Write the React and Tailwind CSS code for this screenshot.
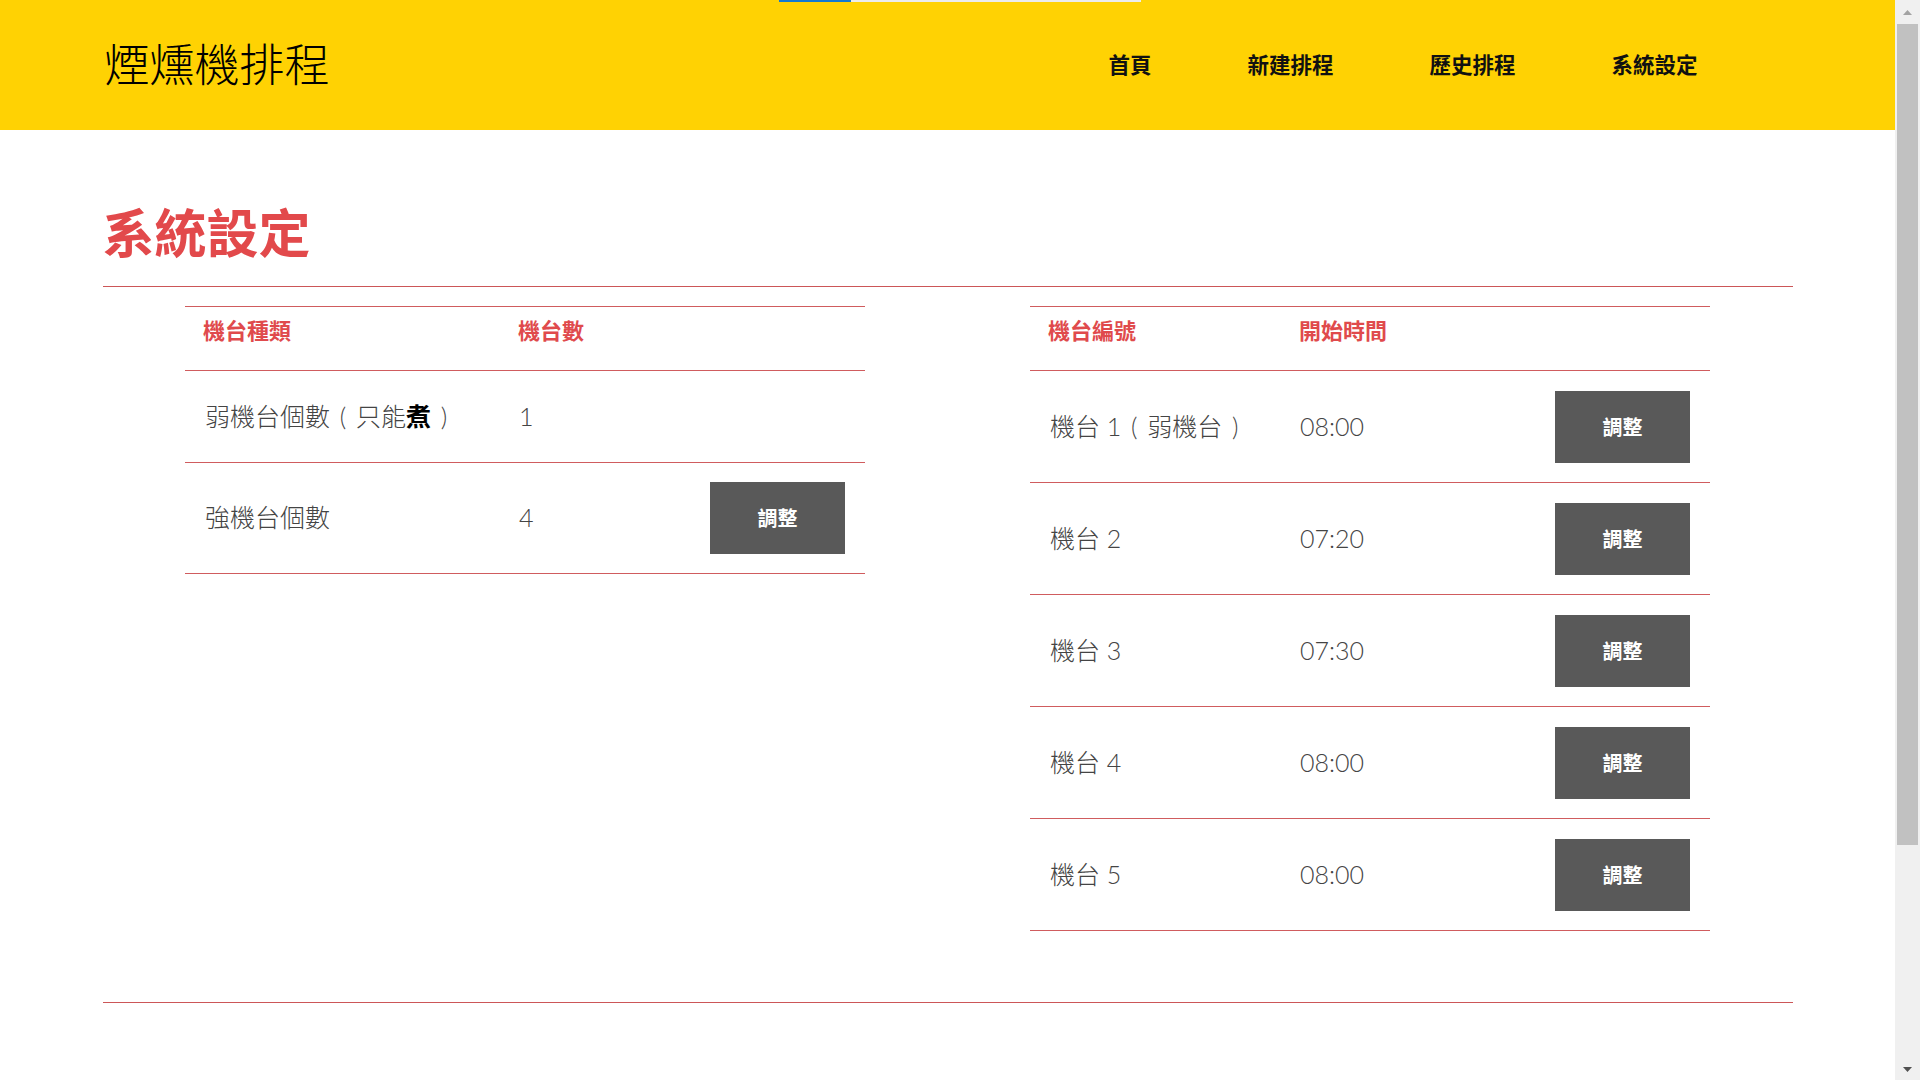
import React from "react";

const navItems = ["首頁", "新建排程", "歷史排程", "系統設定"];

// fullwidth parens in the original sit centred in their box
function P({ children }) {
  return <span className="inline-block w-[26px] text-center">{children}</span>;
}

const machineTypes = [
  {
    key: "weak",
    label: (
      <>
        弱機台個數<P>(</P>只能<span className="font-bold text-black">煮</span>
        <P>)</P>
      </>
    ),
    count: "1",
    adjustable: false,
    height: "h-[92px]",
  },
  { key: "strong", label: "強機台個數", count: "4", adjustable: true, height: "h-[111px]" },
];

const machines = [
  {
    name: (
      <>
        機台 1<P>(</P>弱機台<P>)</P>
      </>
    ),
    start: "08:00",
  },
  { name: "機台 2", start: "07:20" },
  { name: "機台 3", start: "07:30" },
  { name: "機台 4", start: "08:00" },
  { name: "機台 5", start: "08:00" },
];

function AdjustButton() {
  return (
    <button className="ml-auto mr-[20px] flex h-[72px] w-[135px] items-center justify-center bg-[#595959] text-[20px] font-bold text-white">
      調整
    </button>
  );
}

function Scrollbar() {
  return (
    <div className="flex h-full w-[25px] shrink-0 flex-col items-center bg-[#f0f0f0]">
      <div className="flex h-[24px] w-full items-center justify-center">
        <svg width="9" height="5" viewBox="0 0 9 5">
          <path d="M0 5 L4.5 0 L9 5 Z" fill="#a3a3a3" />
        </svg>
      </div>
      <div className="h-[821px] w-[21px] bg-[#c1c1c1]" />
      <div className="flex-1" />
      <div className="flex h-[22px] w-full items-center justify-center">
        <svg width="9" height="5" viewBox="0 0 9 5">
          <path d="M0 0 L4.5 5 L9 0 Z" fill="#505050" />
        </svg>
      </div>
    </div>
  );
}

export default function App() {
  return (
    <div className="flex h-[1080px] w-full overflow-hidden bg-white font-['Lato','Noto_Sans_CJK_TC',sans-serif]">
      <div className="flex min-w-0 flex-1 flex-col">
        <header className="relative h-[130px] shrink-0 bg-[#ffd203]">
          <div className="absolute left-[779px] top-0 h-[2px] w-[72px] bg-[#1379d2]" />
          <div className="absolute left-[851px] top-0 h-[2px] w-[290px] bg-[#ececec]" />
          <div className="mx-auto flex h-full w-[1690px] items-center justify-between">
            <div className="pl-[2px] text-[45px] font-light leading-none text-black">煙燻機排程</div>
            <nav className="mr-[47px] flex">
              {navItems.map((item) => (
                <a key={item} className="px-[48px] text-[21.5px] font-bold text-[#111]">
                  {item}
                </a>
              ))}
            </nav>
          </div>
        </header>

        <main className="mx-auto w-[1690px]">
          <h1 className="mt-[72px] border-b border-[#cc5658] pb-[22px] text-[52px] font-bold leading-[62px] text-[#e2494b]">
            系統設定
          </h1>

          <div className="grid grid-cols-2 pt-[19px]">
            <div className="flex justify-center">
              <div className="w-[680px] border-t border-[#d05c5e]">
                <div className="flex h-[64px] items-start border-b border-[#d05c5e] pt-[7px] text-[22px] font-bold leading-[33px] text-[#e04a4c]">
                  <div className="w-[314px] pl-[18px]">機台種類</div>
                  <div className="pl-[19px]">機台數</div>
                </div>
                {machineTypes.map((row) => (
                  <div
                    key={row.key}
                    className={`flex items-center border-b border-[#d05c5e] text-[25px] font-light text-[#444] ${row.height}`}
                  >
                    <div className="w-[314px] pl-[20px]">{row.label}</div>
                    <div className="pl-[20px]">{row.count}</div>
                    {row.adjustable && <AdjustButton />}
                  </div>
                ))}
              </div>
            </div>

            <div className="flex justify-center">
              <div className="w-[680px] border-t border-[#d05c5e]">
                <div className="flex h-[64px] items-start border-b border-[#d05c5e] pt-[7px] text-[22px] font-bold leading-[33px] text-[#e04a4c]">
                  <div className="w-[250px] pl-[18px]">機台編號</div>
                  <div className="pl-[19px]">開始時間</div>
                </div>
                {machines.map((m, i) => (
                  <div
                    key={i}
                    className="flex h-[112px] items-center border-b border-[#d05c5e] text-[25px] font-light text-[#444]"
                  >
                    <div className="w-[250px] pl-[20px]">{m.name}</div>
                    <div className="pl-[20px]">{m.start}</div>
                    <AdjustButton />
                  </div>
                ))}
              </div>
            </div>
          </div>

          <div className="mt-[71px] border-t border-[#cc5658]" />
        </main>
      </div>
      <Scrollbar />
    </div>
  );
}
